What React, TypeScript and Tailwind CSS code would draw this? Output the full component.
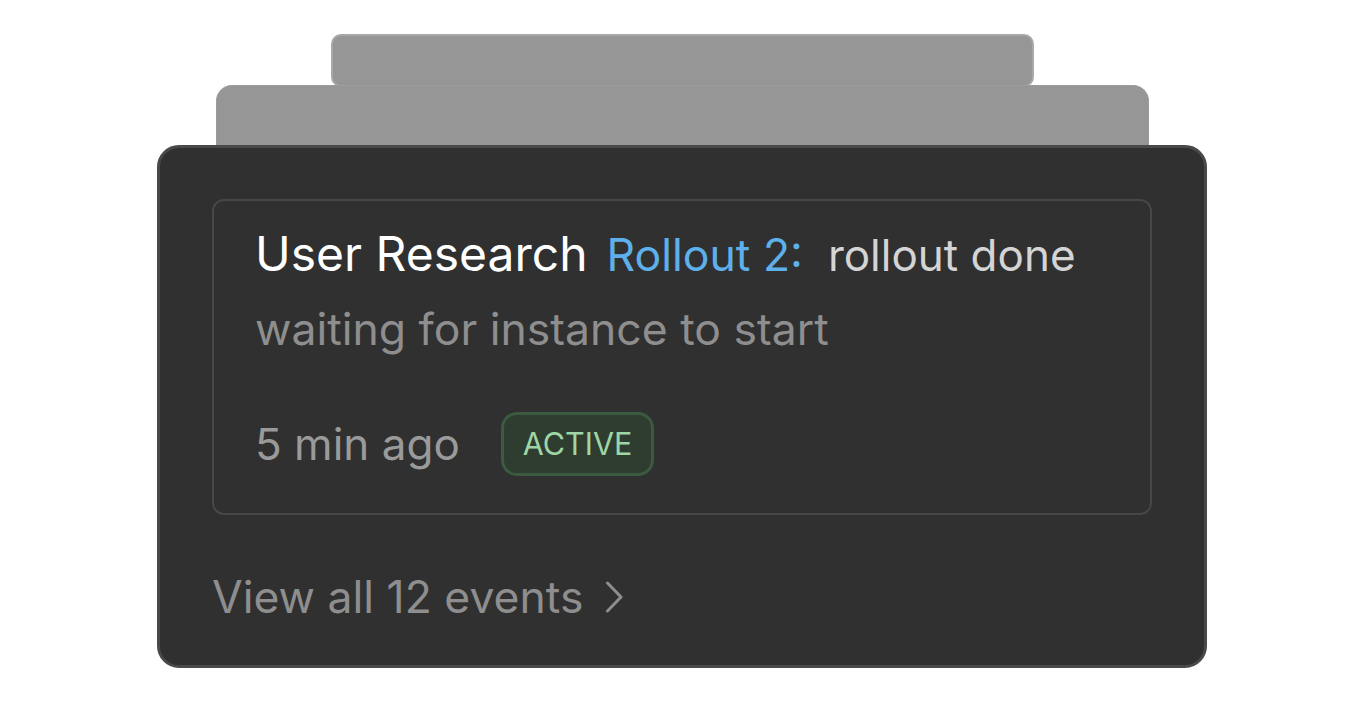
export default function App() {
  return (
    <div
      className="flex min-h-screen w-full flex-col items-center bg-white pt-[34px]"
      style={{ fontFamily: 'Inter, "Noto Sans", sans-serif' }}
    >
      {/* stacked cards behind */}
      <div className="h-[53px] w-[703px] rounded-[10px] border-2 border-[#a8a8a8] bg-[#969696]" />
      <div className="-mt-[2px] h-[63px] w-[933px] rounded-t-[16px] border border-b-0 border-[#9c9c9c] bg-[#969696]" />

      <div className="-mt-[3px] flex h-[523px] w-[1050px] flex-col rounded-[22px] border-[3px] border-[#494949] bg-[#303030] px-[52px] pt-[51px]">
        <div className="flex h-[316px] flex-col rounded-[12px] border-2 border-[#474747] px-[41px] pt-[24px]">
          <div className="flex items-baseline leading-[58px]">
            <span className="text-[48px] text-white">User Research</span>
            <span className="ml-[19px] text-[44.5px] text-[#5eb0ea]">Rollout 2:</span>
            <span className="ml-[25px] text-[44px] text-[#d4d4d4]">rollout done</span>
          </div>
          <div className="mt-[16px] text-[44.5px] leading-[58px] text-[#8e8e8e]">
            waiting for instance to start
          </div>
          <div className="mt-[54px] flex items-center">
            <span className="text-[44px] leading-[58px] text-[#9a9a9a]">5 min ago</span>
            <span className="ml-[41px] flex h-[64px] items-center rounded-[16px] border-[3px] border-[#3b5a3f] bg-[#2f3d31] px-[19px] text-[30.5px] text-[#9fd6a5]">
              ACTIVE
            </span>
          </div>
        </div>

        <div className="mt-[56px] flex items-center text-[#8e8e8e]">
          <span className="text-[44.5px] leading-[52px]">View all 12 events</span>
          <svg className="ml-[22px]" width="19" height="32" viewBox="0 0 19 32" fill="none">
            <polyline
              points="2.5,2 16,16 2.5,30"
              stroke="#8e8e8e"
              strokeWidth="3"
              strokeLinecap="round"
              strokeLinejoin="round"
            />
          </svg>
        </div>
      </div>
    </div>
  );
}
